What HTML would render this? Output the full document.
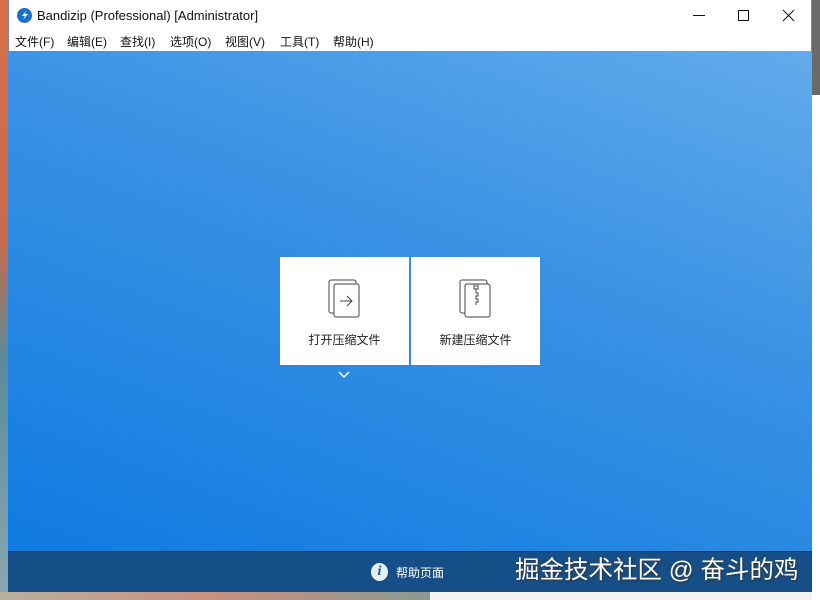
<!DOCTYPE html>
<html><head><meta charset="utf-8"><style>
*{margin:0;padding:0;box-sizing:border-box}
body{width:820px;height:600px;overflow:hidden;position:relative;font-family:"Liberation Sans","Noto Sans CJK SC",sans-serif;background:#f3f3f3}
.bgl{position:absolute;left:0;top:0;width:8px;height:600px;background:linear-gradient(#d8704a 0%,#c86a4a 40%,#5a8a9a 60%,#8aa8b0 100%)}
.bgr{position:absolute;left:812px;top:0;width:8px;height:600px;background:#fff}
.bgr .d{position:absolute;left:0;top:0;width:8px;height:95px;background:#6a6a6a}
.bgb{position:absolute;left:0;top:592px;width:430px;height:8px;background:linear-gradient(90deg,#b8b0a0,#c89080,#8a9a90)}
.win{position:absolute;left:8px;top:0;width:804px;height:592px;background:#fff;border:1px solid #888;border-top:none}
.title{position:absolute;left:30px;top:8px;font-size:13px;color:#111}
.logo{position:absolute;left:17px;top:8px;width:15px;height:15px;border-radius:50%;background:#1a6fc8}
.menu{position:absolute;left:15px;top:33px;font-size:12px;color:#111;white-space:nowrap}
.menu span{position:absolute;top:0}
.main{position:absolute;left:8px;top:51px;width:804px;height:500px;background:linear-gradient(200deg,#62abeb 0%,#3a92e4 40%,#0f7be0 100%)}
.bar{position:absolute;left:8px;top:551px;width:804px;height:41px;background:#164f87;border-top:1px solid #0c3a68}
.card{position:absolute;top:257px;width:129px;height:108px;background:#fff}
.card .t{position:absolute;left:0;right:0;top:74px;text-align:center;font-size:12px;color:#222}
.card svg{position:absolute;left:46px;top:22px}
</style></head><body>
<div class="bgl"></div><div class="bgr"><div class="d"></div></div><div class="bgb"></div>
<div class="win"></div>
<div class="logo"></div>
<svg style="position:absolute;left:17px;top:8px" width="15" height="15"><path d="M9 3 L5 8 H8 L6 12 L11 6 H8 Z" fill="#fff"/></svg>
<div class="title" style="left:37px">Bandizip (Professional) [Administrator]</div>
<svg style="position:absolute;left:690px;top:8px" width="110" height="16"><path d="M3 7.5H15" stroke="#111"/><path d="M48.5 2.5h10v10h-10z" fill="none" stroke="#111"/><path d="M93 2l11 11M104 2L93 13" stroke="#111"/></svg>
<div class="menu"><span style="left:0">文件(F)</span><span style="left:52px">编辑(E)</span><span style="left:105px">查找(I)</span><span style="left:155px">选项(O)</span><span style="left:210px">视图(V)</span><span style="left:265px">工具(T)</span><span style="left:318px">帮助(H)</span></div>
<div class="main"></div>
<div class="card" style="left:280px"><svg width="36" height="40"><rect x="3" y="1" width="27" height="33" rx="2" fill="#fff" stroke="#444"/><rect x="8" y="5" width="25" height="33" rx="2" fill="#fff" stroke="#444"/><path d="M14 22h12M21 17l5 5-5 5" fill="none" stroke="#444"/></svg><div class="t">打开压缩文件</div></div>
<div class="card" style="left:411px"><svg width="36" height="40"><rect x="3" y="1" width="27" height="33" rx="2" fill="#fff" stroke="#444"/><rect x="8" y="5" width="25" height="33" rx="2" fill="#fff" stroke="#444"/><path d="M17 5v5h4V5M18 7h2M19 10v4h2v3h-2v3h2v3h-2v3" fill="none" stroke="#444"/></svg><div class="t">新建压缩文件</div></div>
<svg style="position:absolute;left:338px;top:371px" width="12" height="8"><path d="M1 1l5 5 5-5" fill="none" stroke="#fff" stroke-width="1.5"/></svg>
<div class="bar"></div>
<div style="position:absolute;left:371px;top:563px;width:17px;height:18px;border-radius:50%;background:#e8eef5;color:#164f87;font:italic bold 14px 'Liberation Serif',serif;text-align:center;line-height:18px">i</div>
<div style="position:absolute;left:396px;top:564px;font-size:12px;color:#fff">帮助页面</div>
<div style="position:absolute;left:515px;top:551px;font-size:24.5px;color:#fff;text-shadow:1px 1px 2px #333;white-space:nowrap">掘金技术社区 @ 奋斗的鸡</div>
</body></html>
